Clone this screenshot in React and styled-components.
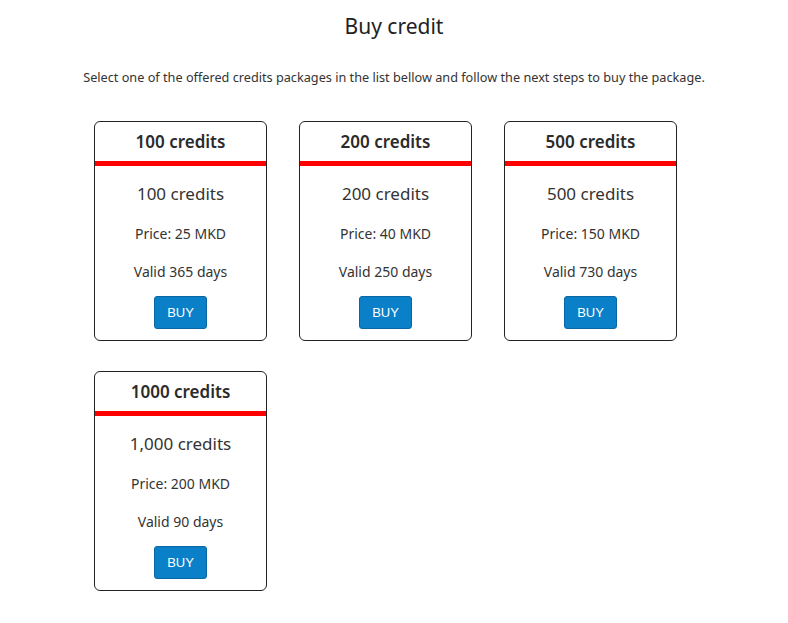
import styled, { createGlobalStyle } from "styled-components";

const packages = [
    { title: "100 credits", amount: "100 credits", price: "25 MKD", days: 365 },
    { title: "200 credits", amount: "200 credits", price: "40 MKD", days: 250 },
    { title: "500 credits", amount: "500 credits", price: "150 MKD", days: 730 },
    { title: "1000 credits", amount: "1,000 credits", price: "200 MKD", days: 90 },
];

export default function App () {
    return(
        <Main>
            <GlobalStyle />
            <Title>Buy credit</Title>
            <Intro>Select one of the offered credits packages in the list bellow and follow the next steps to buy the package.</Intro>
            <Grid>
                {packages.map((p) => (
                    <Card key={p.title}>
                        <CardHead>{p.title}</CardHead>
                        <CardBody>
                            <Amount>{p.amount}</Amount>
                            <Line>Price: {p.price}</Line>
                            <Line>Valid {p.days} days</Line>
                            <BuyButton>BUY</BuyButton>
                        </CardBody>
                    </Card>
                ))}
            </Grid>
        </Main>
    )
}

const GlobalStyle = createGlobalStyle`
body {
    margin: 0;
    background: #fff;
    font-family: "Noto Sans", sans-serif;
    color: #2b2b2b;
}
`;

const Main = styled.div`
    display: flex;
    flex-direction: column;
    width: 788px;
    padding-top: 12px;
`;
const Title = styled.h1`
    margin: 0;
    text-align: center;
    font-size: 21px;
    font-weight: 400;
    line-height: 28px;
    color: #222;
`;
const Intro = styled.p`
    margin: 28px 0 0 0;
    text-align: center;
    font-size: 12.7px;
    line-height: 18px;
    color: #333;
`;
const Grid = styled.div`
    display: grid;
    grid-template-columns: repeat(3, 173px);
    column-gap: 32px;
    row-gap: 30px;
    margin: 35px 0 0 94px;
`;
const Card = styled.div`
    box-sizing: border-box;
    height: 220px;
    border: 1px solid #222;
    border-radius: 6px;
    display: flex;
    flex-direction: column;
`;
const CardHead = styled.div`
    height: 39px;
    border-bottom: 5px solid #ff0000;
    display: flex;
    align-items: center;
    justify-content: center;
    font-size: 17px;
    font-weight: 600;
    color: #2b2b2b;
`;
const CardBody = styled.div`
    display: flex;
    flex-direction: column;
    align-items: center;
    padding-top: 16px;
`;
const Amount = styled.div`
    font-size: 17px;
    line-height: 24px;
    color: #333;
`;
const Line = styled.div`
    font-size: 14px;
    line-height: 20px;
    margin-top: 18px;
    color: #333;
`;
const BuyButton = styled.button`
    margin-top: 14px;
    width: 53px;
    height: 33px;
    border: 1px solid #0a67a3;
    border-radius: 3px;
    background: #0a80c8;
    color: #fff;
    font-family: "Liberation Sans", Arial, sans-serif;
    font-size: 13px;
    padding: 0;
`;
